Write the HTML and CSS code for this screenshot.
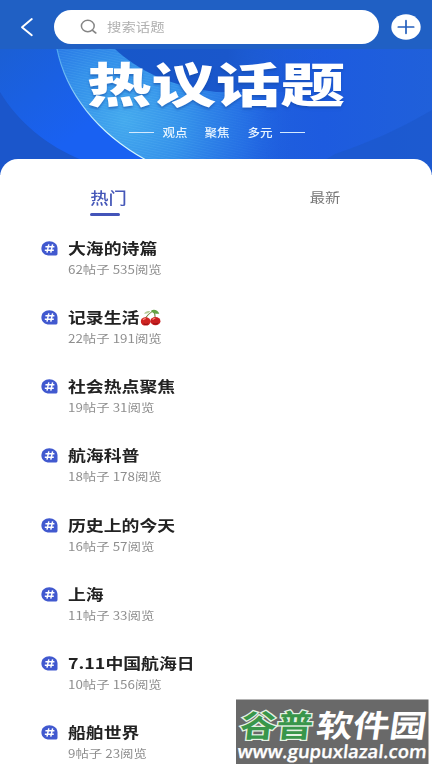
FILE: index.html
```html
<!DOCTYPE html>
<html lang="zh-CN">
<head>
<meta charset="utf-8">
<title>热议话题</title>
<link rel="stylesheet" href="styles.css">
</head>
<body>
<svg class="defs" width="0" height="0">
  <symbol id="hash" viewBox="0 0 17 15">
    <path d="M8.3.3C3.8.3.4 3.4.4 7.4s3.4 7.1 7.9 7.1h6.2c1.3 0 2-.7 2-1.8V7.4C16.500 3.400 12.800.3 8.300.3z" fill="#4159cf"/>
    <path d="M7.800 3.400 6 11.600M11.600 3.400 9.800 11.600M4.400 5.800h9M3.800 9.300h9" stroke="#fff" stroke-width="1.500" fill="none"/>
  </symbol>
</svg>
<div class="screen">
  <header class="topbar">
    <svg class="back" width="14" height="20" viewBox="0 0 14 20"><path d="M11.800 2 2 10.200 11.800 18.200" fill="none" stroke="#fff" stroke-width="1.900" stroke-linecap="round" stroke-linejoin="round"/></svg>
    <div class="search">
      <svg width="18" height="16" viewBox="0 0 18 16"><ellipse cx="7.800" cy="7" rx="6.400" ry="5.700" fill="none" stroke="#858585" stroke-width="1.500"/><path d="M12.200 11.200 15.800 14" stroke="#858585" stroke-width="1.600" stroke-linecap="round"/></svg>
      <span class="placeholder">搜索话题</span>
    </div>
    <svg class="add" width="30" height="26" viewBox="0 0 30 26"><ellipse cx="15" cy="13" rx="14.700" ry="12.700" fill="#fff"/><path d="M7.300 13h15.400M15 6.700v12.600" stroke="#245fbd" stroke-width="1.700" stroke-linecap="round"/></svg>
  </header>

  <section class="banner">
    <svg class="art" width="432" height="126" viewBox="0 49 432 126">
      <defs>
        <linearGradient id="base" gradientUnits="userSpaceOnUse" x1="0" y1="0" x2="432" y2="0"><stop offset="0" stop-color="#1d64df"/><stop offset=".45" stop-color="#2163dc"/><stop offset=".75" stop-color="#1d5bdf"/><stop offset="1" stop-color="#2060da"/></linearGradient>
        <linearGradient id="left" gradientUnits="userSpaceOnUse" x1="0" y1="49" x2="70" y2="140"><stop offset="0" stop-color="#1b5fd4"/><stop offset="1" stop-color="#1961f2"/></linearGradient>
        <radialGradient id="glow" gradientUnits="userSpaceOnUse" cx="125" cy="120" r="175"><stop offset="0" stop-color="#44aaee"/><stop offset=".35" stop-color="#3390ea"/><stop offset=".7" stop-color="#2672e6" stop-opacity=".8"/><stop offset="1" stop-color="#1d5bdf" stop-opacity="0"/></radialGradient>
        <linearGradient id="dark" gradientUnits="userSpaceOnUse" x1="115" y1="0" x2="340" y2="0"><stop offset="0" stop-color="#1757c9"/><stop offset=".5" stop-color="#1a57cb"/><stop offset="1" stop-color="#1d5bdf" stop-opacity="0"/></linearGradient>
        <pattern id="hair" width="4" height="2.500" patternUnits="userSpaceOnUse" patternTransform="rotate(12)"><path d="M0 .5h4" stroke="#8fdcff" stroke-width=".5" opacity=".22"/></pattern>
        <linearGradient id="fade" gradientUnits="userSpaceOnUse" x1="60" y1="0" x2="285" y2="0"><stop offset="0" stop-color="#fff"/><stop offset=".5" stop-color="#fff"/><stop offset="1" stop-color="#000"/></linearGradient>
        <mask id="soft"><path d="M0 49h432v126H0z" fill="url(#fade)"/></mask>
        <linearGradient id="rim" gradientUnits="userSpaceOnUse" x1="57" y1="49" x2="110" y2="132"><stop offset="0" stop-color="#4aa6ee"/><stop offset="1" stop-color="#d3f6ff"/></linearGradient>
      </defs>
      <path d="M0 49h432v126H0z" fill="url(#base)"/>
      <path d="M0 49h150v126H0z" fill="url(#left)"/>
      <path d="M0 92C18 122 47 146 82 160V175H0z" fill="#1b56cb"/>
      <path d="M57 49C66 93 97 133 146 160L170 175H432V49z" fill="url(#base)"/>
      <path d="M57 49C66 93 97 133 146 160L170 175H432V49z" fill="url(#glow)"/>
      <path d="M57 49C66 93 97 133 146 160L170 175H432V49z" fill="url(#hair)" mask="url(#soft)"/>
      <path d="M115 49C138 70 168 86 216 92H340V49z" fill="url(#dark)"/>
      <path d="M57 49C66 93 97 133 146 160" fill="none" stroke="url(#rim)" stroke-width="1.200"/>
      <path d="M432 110C400 129 370 142 335 154L300 175H432z" fill="#1c58cc" opacity=".75"/>
    </svg>
    <div class="headline">热议话题</div>
    <div class="tags"><i></i><span>观点</span><span>聚焦</span><span>多元</span><i></i></div>
  </section>

  <main class="sheet">
    <nav class="tabs">
      <div class="tab active"><span>热门</span></div>
      <div class="tab"><span>最新</span></div>
    </nav>
    <ul class="topics">
      <li><svg class="mark"><use href="#hash"/></svg><div><h2>大海的诗篇</h2><p>62帖子 535阅览</p></div></li>
      <li><svg class="mark"><use href="#hash"/></svg><div><h2>记录生活<svg class="cherry" width="17" height="17" viewBox="0 0 20 18" preserveAspectRatio="none"><path d="M4.500 11C6 7 9 4 13 2M14.500 10C14.500 7 14 4 12.500 2" fill="none" stroke="#71823b" stroke-width="1"/><path d="M10 2C13-.5 17 1 18.500 5 15 5.500 12.500 4.500 10 2z" fill="#62a344"/><path d="M9.500 2.500C7 1.500 4.500 3 3.500 5 6 5.500 8.500 4.500 9.500 2.500z" fill="#b5cd98"/><ellipse cx="5" cy="13.200" rx="4.900" ry="4.400" fill="#cf2421"/><ellipse cx="14.700" cy="12.900" rx="5" ry="4.400" fill="#c91f20"/><path d="M2.500 11.500q1-1.600 2.500-1.300M12 11.200q1-1.600 2.500-1.300" stroke="#ff9184" fill="none" stroke-width="1.200"/><path d="M3 15.500q2 1.600 4.500 0M12.500 15.200q2.500 1.500 4.500-.2" stroke="#8e1218" fill="none"/></svg></h2><p>22帖子 191阅览</p></div></li>
      <li><svg class="mark"><use href="#hash"/></svg><div><h2>社会热点聚焦</h2><p>19帖子 31阅览</p></div></li>
      <li><svg class="mark"><use href="#hash"/></svg><div><h2>航海科普</h2><p>18帖子 178阅览</p></div></li>
      <li><svg class="mark"><use href="#hash"/></svg><div><h2>历史上的今天</h2><p>16帖子 57阅览</p></div></li>
      <li><svg class="mark"><use href="#hash"/></svg><div><h2>上海</h2><p>11帖子 33阅览</p></div></li>
      <li><svg class="mark"><use href="#hash"/></svg><div><h2>7.11中国航海日</h2><p>10帖子 156阅览</p></div></li>
      <li><svg class="mark"><use href="#hash"/></svg><div><h2>船舶世界</h2><p>9帖子 23阅览</p></div></li>
    </ul>
  </main>

  <svg class="watermark" width="193" height="69" viewBox="0 0 193 69">
    <path d="M0 .5h192.500v64.500H0z" fill="#696969"/>
    <g class="wm-name">
      <text class="wm-green" transform="translate(3 38) skewX(-6)" textLength="73" lengthAdjust="spacingAndGlyphs">谷普</text>
      <text class="wm-white" transform="translate(79 38) skewX(-8)" textLength="110" lengthAdjust="spacingAndGlyphs">软件园</text>
    </g>
    <text class="wm-url" transform="translate(1 59) skewX(-6)" textLength="189" lengthAdjust="spacingAndGlyphs">www.gupuxlazal.com</text>
  </svg>
</div>
</body>
</html>
```

FILE: styles.css
```css
* { box-sizing: border-box; }
body {
  margin: 0;
  font-family: "Noto Sans CJK SC", sans-serif;
  background: #fff;
}
.defs { position: absolute; }
.screen {
  position: relative;
  width: 432px;
  height: 768px;
  overflow: hidden;
}
.topbar {
  display: flex;
  align-items: center;
  height: 49px;
  padding: 4px 11px 0 20px;
  background: #2060c4;
}
.search {
  display: flex;
  align-items: center;
  width: 325px;
  height: 34px;
  margin: 0 12px 0 20px;
  padding-left: 26px;
  border-radius: 17px;
  background: #fff;
}
.placeholder {
  margin-left: 9px;
  font-size: 12.500px;
  line-height: 18px;
  color: #b0b0b0;
  transform: scaleX(1.150);
  transform-origin: left;
}
.banner {
  position: relative;
  height: 110px;
}
.art {
  position: absolute;
  top: 0;
  left: 0;
}
.headline {
  position: relative;
  width: 200px;
  margin: 0 auto;
  padding-top: 8px;
  font-size: 50px;
  font-weight: 900;
  line-height: 50px;
  color: #fff;
  text-shadow: 0 2px 2px rgba(18, 70, 160, .5);
  transform: scale(1.290, .93);
}
.tags {
  position: relative;
  display: flex;
  align-items: center;
  margin: 16px 0 0 129px;
  height: 18px;
  font-size: 11px;
  font-weight: 500;
  color: #e9f5ff;
}
.tags i { width: 25px; height: 1px; background: #d5eaff; }
.tags span {
  width: 22px;
  margin: 0 10.300px 0 10px;
  white-space: nowrap;
  transform: scaleX(1.140);
}
.tags i:last-child { margin-left: -1px; }
.sheet {
  position: relative;
  height: 609px;
  border-radius: 18px 18px 0 0;
  background: #fff;
}
.tabs {
  display: flex;
  height: 56px;
}
.tab {
  display: flex;
  justify-content: center;
  width: 216px;
  padding-top: 28px;
  font-size: 13px;
  line-height: 20px;
  color: #777;
}
.tab:last-child { padding-left: 2px; }
.tab span { transform: scaleX(1.180); }
.tab.active {
  position: relative;
  padding-left: 1px;
  font-size: 15.500px;
  font-weight: 500;
  color: #4557b8;
}
.tab.active::after {
  content: "";
  position: absolute;
  left: 90px;
  top: 54px;
  width: 30px;
  height: 2.500px;
  border-radius: 2px;
  background: #4354b9;
}
.topics {
  margin: 0;
  padding: 22px 0 0 41px;
  list-style: none;
}
.topics li {
  display: flex;
  height: 69.150px;
}
.mark {
  width: 17px;
  height: 15px;
  margin: 4px 10px 0 0;
}
h2, p { margin: 0; white-space: nowrap; transform-origin: left; }
h2 {
  display: flex;
  align-items: center;
  height: 22px;
  font-size: 15px;
  font-weight: 700;
  line-height: 22px;
  color: #222;
  transform: scaleX(1.190);
}
p {
  height: 20px;
  font-size: 11.500px;
  line-height: 20px;
  color: #8e8e8e;
  transform: scaleX(1.165);
}
.cherry { margin-left: 1px; }
.watermark {
  position: absolute;
  left: 236px;
  top: 699px;
}
.wm-name { font-size: 31px; font-weight: 700; }
.wm-green { fill: #38964a; stroke: #e4f2e4; stroke-width: 2.500px; paint-order: stroke; }
.wm-white { fill: #fff; }
.wm-url {
  font-family: "Open Sans", sans-serif;
  font-size: 18px;
  font-weight: 600;
  fill: #fff;
  stroke: #fff;
  stroke-width: .3px;
}
```
